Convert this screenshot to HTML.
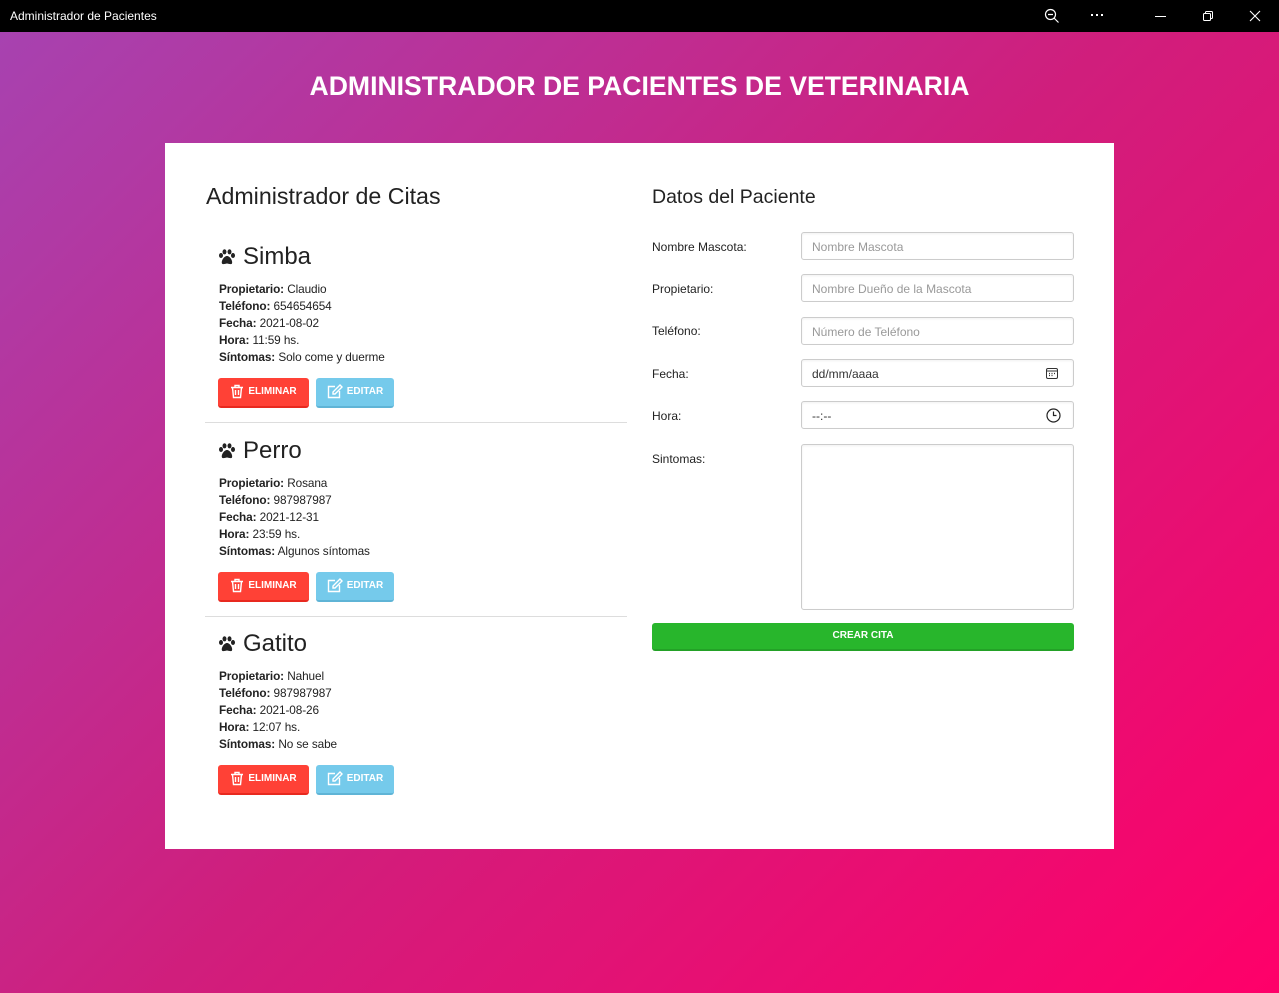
<!DOCTYPE html>
<html><head><meta charset="utf-8"><style>
*{box-sizing:border-box;margin:0;padding:0}
body{width:1279px;height:993px;overflow:hidden;font-family:"Liberation Sans",sans-serif;position:relative;background:#000}
.tb{position:absolute;left:0;top:0;width:1279px;height:32px;background:#000;color:#fff;font-size:12px}
.tb .t{position:absolute;left:10px;top:9px}
.bg{position:absolute;left:0;top:32px;width:1279px;height:961px;background:linear-gradient(135deg,#a742b0 0%,#d01e7c 50%,#ff0069 100%)}
h1{position:absolute;top:71px;left:0;width:1279px;text-align:center;color:#fff;font-size:26.6px;font-weight:bold}
.card{position:absolute;left:165px;top:143px;width:949px;height:706px;background:#fff}
.a{position:absolute}
.h2{font-size:23.2px;color:#222}
.name{font-size:24px;color:#222}
.det{font-size:11.8px;color:#222;line-height:17px;letter-spacing:-0.1px}
.det b{font-weight:bold}
.btn{position:absolute;height:30px;border-radius:3px;color:#fff;font-size:10px;font-weight:bold;display:flex;align-items:center;justify-content:center;gap:4px;padding-bottom:2px}
.red{background:#ff4136;border-bottom:2px solid #e8291f}
.blue{background:#75caeb;border-bottom:2px solid #5fb4d6}
.sep{position:absolute;left:40px;width:422px;height:1px;background:#ddd}
.lab{position:absolute;left:487px;font-size:12px;color:#222}
.in{position:absolute;left:636px;width:273px;height:28px;border:1px solid #ccc;border-radius:3px;font-size:12px;color:#999;padding:7px 10px;box-shadow:inset 0 1px 2px rgba(0,0,0,.06)}
</style></head><body>
<div class="tb"><span class="t">Administrador de Pacientes</span>
<svg class="a" style="left:1044px;top:8px" width="16" height="16" viewBox="0 0 16 16" fill="none" stroke="#fff" stroke-width="1.2"><circle cx="6.5" cy="6.5" r="5"/><path d="M4 6.5h5M10 10l4.5 4.5"/></svg>
<div class="a" style="left:1091px;top:14px;width:16px;height:3px;display:flex;gap:3px"><i style="width:2px;height:2px;background:#fff"></i><i style="width:2px;height:2px;background:#fff"></i><i style="width:2px;height:2px;background:#fff"></i></div>
<div class="a" style="left:1155px;top:16px;width:11px;height:1px;background:#fff"></div>
<svg class="a" style="left:1202px;top:10px" width="12" height="12" viewBox="0 0 12 12" fill="none" stroke="#fff"><rect x="1.5" y="3.5" width="7" height="7" rx="1"/><path d="M3.5 3.5V2.5a1 1 0 0 1 1-1h5a1 1 0 0 1 1 1v5a1 1 0 0 1-1 1h-1"/></svg>
<svg class="a" style="left:1249px;top:10px" width="12" height="12" viewBox="0 0 12 12" stroke="#fff" stroke-width="1.1"><path d="M1 1l10 10M11 1L1 11"/></svg>
</div>
<div class="bg"></div>
<h1>ADMINISTRADOR DE PACIENTES DE VETERINARIA</h1>
<div class="card">
<div class="a h2" style="left:41px;top:40px">Administrador de Citas</div>

<svg class="a" style="left:53px;top:106px" width="18" height="16" viewBox="0 0 18 16" fill="#222"><ellipse cx="3" cy="6.5" rx="2" ry="2.5"/><ellipse cx="6.5" cy="2.8" rx="2" ry="2.6"/><ellipse cx="11.5" cy="2.8" rx="2" ry="2.6"/><ellipse cx="15" cy="6.5" rx="2" ry="2.5"/><path d="M9 7c-3 0-6 5-5 7.5 1 1.5 3.5 0 5 0s4 1.5 5 0c1-2.5-2-7.5-5-7.5z"/></svg>
<div class="a name" style="left:78px;top:100px">Simba</div>
<div class="a det" style="left:54px;top:138px"><b>Propietario:</b> Claudio<br><b>Teléfono:</b> 654654654<br><b>Fecha:</b> 2021-08-02<br><b>Hora:</b> 11:59 hs.<br><b>Síntomas:</b> Solo come y duerme</div>
<div class="btn red" style="left:53px;top:235px;width:91px"><svg width="14" height="15" viewBox="0 0 14 15" fill="none" stroke="#fff" stroke-width="1.4"><path d="M1 3.5h12M5 3.5V1.5h4v2M2.5 3.5l1 10h7l1-10M5.5 6v5M8.5 6v5"/></svg>ELIMINAR</div>
<div class="btn blue" style="left:151px;top:235px;width:78px"><svg width="16" height="15" viewBox="0 0 16 15" fill="none" stroke="#fff" stroke-width="1.4"><path d="M8 2.5H1.5v11h11V7"/><path d="M13 1l2 2-7 7H6V8z"/></svg>EDITAR</div>
<div class="sep" style="top:279px"></div>

<svg class="a" style="left:53px;top:300px" width="18" height="16" viewBox="0 0 18 16" fill="#222"><ellipse cx="3" cy="6.5" rx="2" ry="2.5"/><ellipse cx="6.5" cy="2.8" rx="2" ry="2.6"/><ellipse cx="11.5" cy="2.8" rx="2" ry="2.6"/><ellipse cx="15" cy="6.5" rx="2" ry="2.5"/><path d="M9 7c-3 0-6 5-5 7.5 1 1.5 3.5 0 5 0s4 1.5 5 0c1-2.5-2-7.5-5-7.5z"/></svg>
<div class="a name" style="left:78px;top:294px">Perro</div>
<div class="a det" style="left:54px;top:332px"><b>Propietario:</b> Rosana<br><b>Teléfono:</b> 987987987<br><b>Fecha:</b> 2021-12-31<br><b>Hora:</b> 23:59 hs.<br><b>Síntomas:</b> Algunos síntomas</div>
<div class="btn red" style="left:53px;top:429px;width:91px"><svg width="14" height="15" viewBox="0 0 14 15" fill="none" stroke="#fff" stroke-width="1.4"><path d="M1 3.5h12M5 3.5V1.5h4v2M2.5 3.5l1 10h7l1-10M5.5 6v5M8.5 6v5"/></svg>ELIMINAR</div>
<div class="btn blue" style="left:151px;top:429px;width:78px"><svg width="16" height="15" viewBox="0 0 16 15" fill="none" stroke="#fff" stroke-width="1.4"><path d="M8 2.5H1.5v11h11V7"/><path d="M13 1l2 2-7 7H6V8z"/></svg>EDITAR</div>
<div class="sep" style="top:473px"></div>

<svg class="a" style="left:53px;top:493px" width="18" height="16" viewBox="0 0 18 16" fill="#222"><ellipse cx="3" cy="6.5" rx="2" ry="2.5"/><ellipse cx="6.5" cy="2.8" rx="2" ry="2.6"/><ellipse cx="11.5" cy="2.8" rx="2" ry="2.6"/><ellipse cx="15" cy="6.5" rx="2" ry="2.5"/><path d="M9 7c-3 0-6 5-5 7.5 1 1.5 3.5 0 5 0s4 1.5 5 0c1-2.5-2-7.5-5-7.5z"/></svg>
<div class="a name" style="left:78px;top:487px">Gatito</div>
<div class="a det" style="left:54px;top:525px"><b>Propietario:</b> Nahuel<br><b>Teléfono:</b> 987987987<br><b>Fecha:</b> 2021-08-26<br><b>Hora:</b> 12:07 hs.<br><b>Síntomas:</b> No se sabe</div>
<div class="btn red" style="left:53px;top:622px;width:91px"><svg width="14" height="15" viewBox="0 0 14 15" fill="none" stroke="#fff" stroke-width="1.4"><path d="M1 3.5h12M5 3.5V1.5h4v2M2.5 3.5l1 10h7l1-10M5.5 6v5M8.5 6v5"/></svg>ELIMINAR</div>
<div class="btn blue" style="left:151px;top:622px;width:78px"><svg width="16" height="15" viewBox="0 0 16 15" fill="none" stroke="#fff" stroke-width="1.4"><path d="M8 2.5H1.5v11h11V7"/><path d="M13 1l2 2-7 7H6V8z"/></svg>EDITAR</div>

<div class="a" style="left:487px;top:43px;font-size:19.5px;color:#222">Datos del Paciente</div>
<div class="lab" style="top:97px">Nombre Mascota:</div>
<div class="in" style="top:89px">Nombre Mascota</div>
<div class="lab" style="top:139px">Propietario:</div>
<div class="in" style="top:131px">Nombre Dueño de la Mascota</div>
<div class="lab" style="top:181px">Teléfono:</div>
<div class="in" style="top:174px">Número de Teléfono</div>
<div class="lab" style="top:224px">Fecha:</div>
<div class="in" style="top:216px;color:#333">dd/mm/aaaa<svg class="a" style="right:15px;top:7px" width="12" height="12" viewBox="0 0 12 12" fill="none" stroke="#333"><rect x="0.5" y="1.5" width="11" height="10" rx="1.5"/><path d="M0.5 4h11"/><path d="M3 6.5h1M5.5 6.5h1M8 6.5h1M3 8.5h1M5.5 8.5h1" stroke-width="1.2"/></svg></div>
<div class="lab" style="top:266px">Hora:</div>
<div class="in" style="top:258px;color:#333">--:--<svg class="a" style="right:12px;top:6px" width="15" height="15" viewBox="0 0 15 15" fill="none" stroke="#222" stroke-width="1.2"><circle cx="7.5" cy="7.5" r="6.5"/><path d="M7.5 3.5v4h3"/></svg></div>
<div class="lab" style="top:309px">Sintomas:</div>
<div class="in" style="top:301px;height:166px"></div>
<div class="btn" style="left:487px;top:480px;width:422px;height:28px;background:#28b62c;border-bottom:2px solid #23a127">CREAR CITA</div>
</div>
</body></html>
